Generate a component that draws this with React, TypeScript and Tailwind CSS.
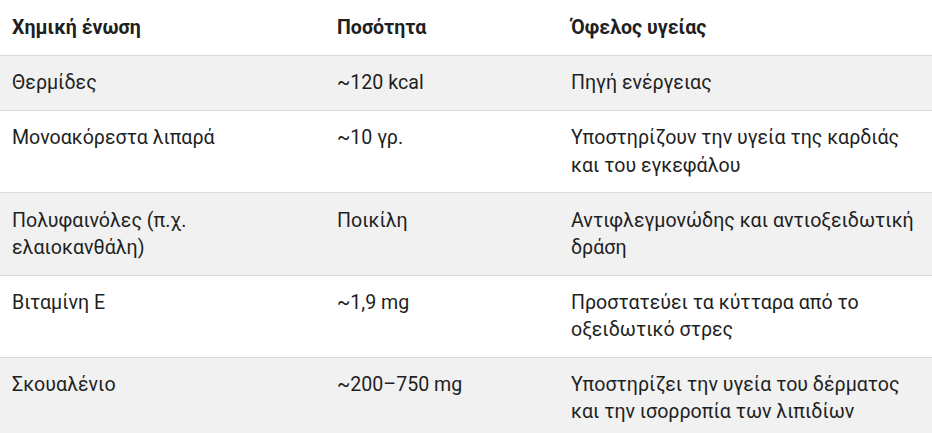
import React from "react";

const rows: [string, string, string][] = [
  ["Θερμίδες", "~120 kcal", "Πηγή ενέργειας"],
  ["Μονοακόρεστα λιπαρά", "~10 γρ.", "Υποστηρίζουν την υγεία της καρδιάς και του εγκεφάλου"],
  ["Πολυφαινόλες (π.χ. ελαιοκανθάλη)", "Ποικίλη", "Αντιφλεγμονώδης και αντιοξειδωτική δράση"],
  ["Βιταμίνη Ε", "~1,9 mg", "Προστατεύει τα κύτταρα από το οξειδωτικό στρες"],
  ["Σκουαλένιο", "~200–750 mg", "Υποστηρίζει την υγεία του δέρματος και την ισορροπία των λιπιδίων"],
];

export default function App() {
  return (
    <div className="w-[932px] h-[433px] overflow-hidden bg-white font-['Roboto',sans-serif] text-[#1f1f1f] text-[19.6px] leading-[27.3px]">
      <table className="w-full table-fixed border-collapse">
        <colgroup>
          <col className="w-[325px]" />
          <col className="w-[234px]" />
          <col />
        </colgroup>
        <thead>
          <tr className="border-b border-[#dadada]">
            <th className="px-3 py-[13.85px] text-left align-top font-bold">Χημική ένωση</th>
            <th className="px-3 py-[13.85px] text-left align-top font-bold">Ποσότητα</th>
            <th className="px-3 py-[13.85px] text-left align-top font-bold">Όφελος υγείας</th>
          </tr>
        </thead>
        <tbody>
          {rows.map((r, i) => (
            <tr key={i} className={`border-b border-[#dadada] ${i % 2 === 0 ? "bg-[#f1f1f1]" : "bg-white"}`}>
              <td className="px-3 py-[13.35px] align-top">{r[0]}</td>
              <td className="px-3 py-[13.35px] align-top">{r[1]}</td>
              <td className="px-3 py-[13.35px] align-top">{r[2]}</td>
            </tr>
          ))}
        </tbody>
      </table>
    </div>
  );
}
